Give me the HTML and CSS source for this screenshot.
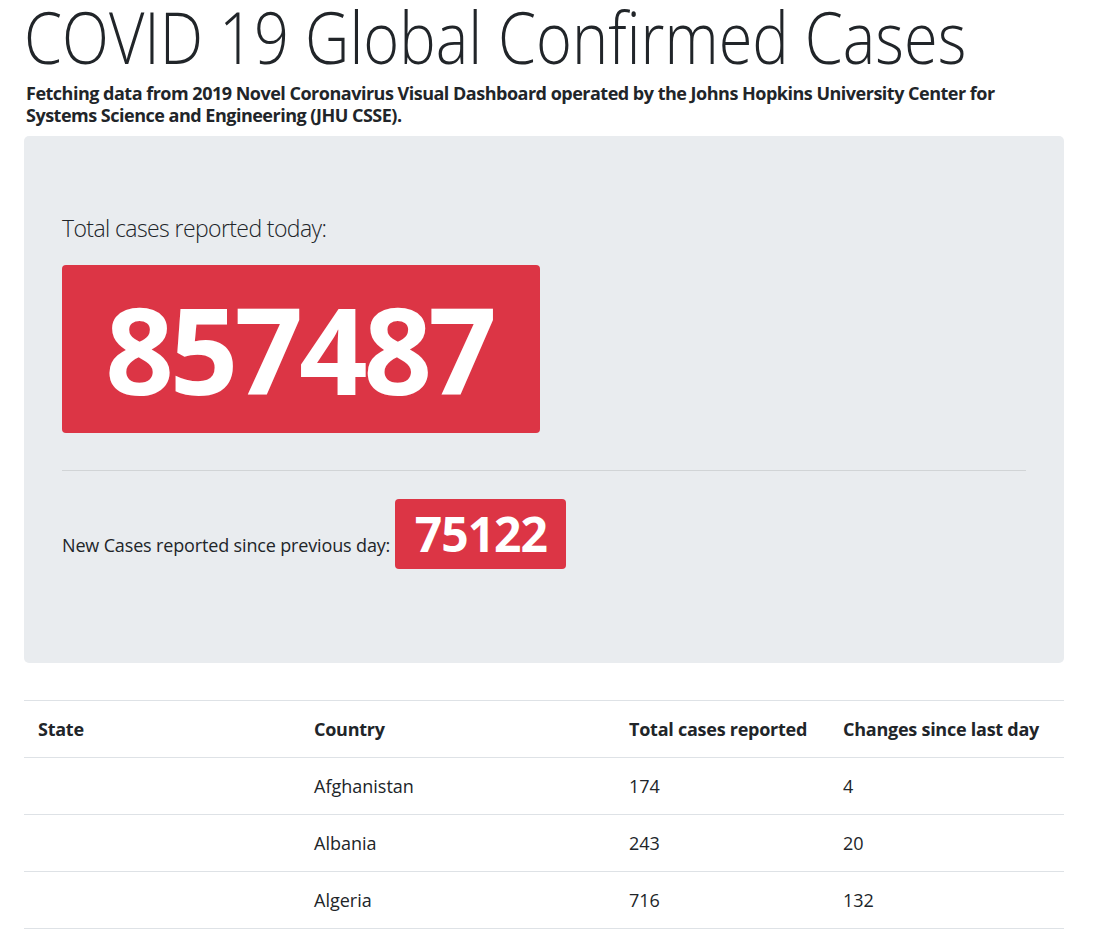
FILE: index.html
```html
<!DOCTYPE html>
<html lang="en">
<head>
<meta charset="utf-8">
<title>COVID 19 Global Confirmed Cases</title>
<link rel="stylesheet" href="styles.css">
</head>
<body>
<main class="page">
  <h1 class="title">COVID 19 Global Confirmed Cases</h1>
  <p class="subtitle">Fetching data from 2019 Novel Coronavirus Visual Dashboard operated by the Johns Hopkins University Center for Systems Science and Engineering (JHU CSSE).</p>

  <section class="jumbotron">
    <p class="lead">Total cases reported today:</p>
    <div class="total-box">857487</div>
    <hr class="divider">
    <p class="new-cases">New Cases reported since previous day: <span class="new-badge">75122</span></p>
  </section>

  <table class="cases">
    <colgroup>
      <col class="c-state">
      <col class="c-country">
      <col class="c-total">
      <col class="c-change">
    </colgroup>
    <thead>
      <tr><th>State</th><th>Country</th><th>Total cases reported</th><th>Changes since last day</th></tr>
    </thead>
    <tbody>
      <tr><td></td><td>Afghanistan</td><td>174</td><td>4</td></tr>
      <tr><td></td><td>Albania</td><td>243</td><td>20</td></tr>
      <tr><td></td><td>Algeria</td><td>716</td><td>132</td></tr>
    </tbody>
  </table>
</main>
</body>
</html>
```

FILE: styles.css
```css
* { box-sizing: border-box; }

html, body {
  margin: 0;
  padding: 0;
  background: #fff;
}

body {
  font-family: "Open Sans", "Noto Sans", "Liberation Sans", sans-serif;
  color: #212529;
}

.page {
  width: 1040px;
  margin-left: 24px;
}

.title {
  margin: 0;
  font-size: 72px;
  line-height: 72px;
  font-weight: 300;
  white-space: nowrap;
  transform: scaleX(0.852);
  transform-origin: 0 0;
}

.subtitle {
  margin: 10px 0 10px 2px;
  font-size: 18px;
  line-height: 22px;
  font-weight: 700;
  letter-spacing: -0.5px;
}

.jumbotron {
  background: #e9ecef;
  border-radius: 5px;
  padding: 76px 38px 94px;
  margin-bottom: 37px;
}

.lead {
  margin: 0 0 21px;
  font-size: 23px;
  line-height: 32px;
  font-weight: 300;
  letter-spacing: -0.6px;
}

.total-box {
  width: 478px;
  height: 168px;
  padding-right: 4px;
  background: #dc3545;
  color: #fff;
  border-radius: 4px;
  font-size: 120px;
  line-height: 168px;
  font-weight: 700;
  letter-spacing: -4px;
  text-align: center;
}

.divider {
  margin: 37px 0 28px;
  border: 0;
  border-top: 1px solid rgba(0, 0, 0, 0.1);
}

.new-cases {
  margin: 0;
  font-size: 18px;
  letter-spacing: -0.15px;
}

.new-badge {
  display: inline-block;
  height: 70px;
  padding: 0 19px 0 20px;
  background: #dc3545;
  color: #fff;
  border-radius: 4px;
  font-size: 48px;
  line-height: 70px;
  font-weight: 700;
  letter-spacing: -1px;
}

.cases {
  width: 1040px;
  border-collapse: collapse;
  table-layout: fixed;
  font-size: 18px;
}

.c-state { width: 276px; }
.c-country { width: 315px; }
.c-total { width: 214px; }
.c-change { width: 235px; }

.cases th,
.cases td {
  text-align: left;
  padding: 14px 14px;
  line-height: 28px;
  border-top: 1px solid #dee2e6;
  vertical-align: top;
}

.cases th {
  font-weight: 700;
  letter-spacing: -0.25px;
}

.cases tbody tr:last-child td { border-bottom: 1px solid #dee2e6; }
```
